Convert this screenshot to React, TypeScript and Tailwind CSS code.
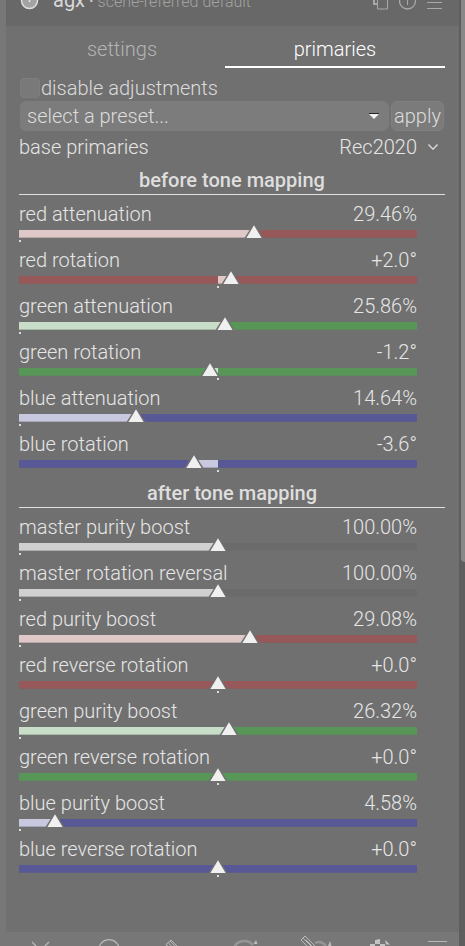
import { useId, useState } from "react";
import type { ReactNode } from "react";

type Tone = "red" | "green" | "blue" | "gray";

const tones: Record<Tone, { track: string; fill: string }> = {
  red: { track: "bg-[#965858] border-[#8b5c5c]", fill: "bg-[#dec8c8] border-[#b9a6a6]" },
  green: { track: "bg-[#589658] border-[#5c8b5c]", fill: "bg-[#c8dec8] border-[#a6b9a6]" },
  blue: { track: "bg-[#585896] border-[#5c5c8b]", fill: "bg-[#c8c8de] border-[#a6a6b9]" },
  gray: { track: "bg-[#6b6b6b] border-[#6d6d6d]", fill: "bg-[#d0d0d0] border-[#acacac]" },
};

type SliderSpec = {
  label: string;
  tone: Tone;
  value: number;
  min: number;
  max: number;
  unit: "%" | "°";
  origin: number;
};

const percent = (label: string, tone: Tone, value: number, max = 50): SliderSpec => ({
  label, tone, value, min: 0, max, unit: "%", origin: 0,
});
const angle = (label: string, tone: Tone, value: number): SliderSpec => ({
  label, tone, value, min: -30, max: 30, unit: "°", origin: 50,
});

const before: SliderSpec[] = [
  percent("red attenuation", "red", 29.46),
  angle("red rotation", "red", 2),
  percent("green attenuation", "green", 25.86),
  angle("green rotation", "green", -1.2),
  percent("blue attenuation", "blue", 14.64),
  angle("blue rotation", "blue", -3.6),
];

const after: SliderSpec[] = [
  percent("master purity boost", "gray", 100, 200),
  percent("master rotation reversal", "gray", 100, 200),
  percent("red purity boost", "red", 29.08),
  angle("red reverse rotation", "red", 0),
  percent("green purity boost", "green", 26.32),
  angle("green reverse rotation", "green", 0),
  percent("blue purity boost", "blue", 4.58),
  angle("blue reverse rotation", "blue", 0),
];

function format(value: number, unit: "%" | "°") {
  if (unit === "%") return value.toFixed(2) + "%";
  return (value >= 0 ? "+" : "") + value.toFixed(1) + "°";
}

function Slider({ spec }: { spec: SliderSpec }) {
  const id = useId();
  const [value, setValue] = useState(spec.value);
  const position = ((value - spec.min) / (spec.max - spec.min)) * 100;
  const start = Math.min(position, spec.origin);
  const length = Math.abs(position - spec.origin);
  const tone = tones[spec.tone];
  return (
    <div className="mr-7 pb-2">
      <div className="mb-0.5 flex justify-between leading-7">
        <label htmlFor={id}>{spec.label}</label>
        <output htmlFor={id}>{format(value, spec.unit)}</output>
      </div>
      <div className={"relative h-2 border-b " + tone.track}>
        <div
          className={"absolute top-0 h-2 border-b " + tone.fill}
          style={{ left: `${start}%`, width: `${length}%` }}
        />
        <div
          className="absolute top-2.5 h-0.5 w-0.5 bg-[#dcdcdc]"
          style={{ left: spec.origin === 0 ? "0" : "calc(50% - 1px)" }}
        />
        <svg
          className="absolute -top-[7px] h-[15px] w-[22px] -translate-x-1/2"
          style={{ left: `${position}%` }}
          viewBox="0 0 22 15"
          aria-hidden="true"
        >
          <path d="M11 0 L20.5 15 H1.5 Z" fill="#707070" />
          <path d="M11 2.2 L18.6 15 H3.4 Z" fill="#f0f0f0" />
        </svg>
        <input
          id={id}
          type="range"
          min={spec.min}
          max={spec.max}
          step={spec.unit === "%" ? 0.01 : 0.1}
          value={value}
          onChange={(e) => setValue(Number(e.target.value))}
          className="absolute -top-1 left-0 h-4 w-full cursor-pointer opacity-0"
        />
      </div>
    </div>
  );
}

function Section({ title, sliders }: { title: string; sliders: SliderSpec[] }) {
  return (
    <section>
      <h2 className="mb-[5px] border-b border-[#e0e0e0] text-center leading-7 font-medium text-[#dedede]">{title}</h2>
      {sliders.map((s) => (
        <Slider key={s.label} spec={s} />
      ))}
    </section>
  );
}

function IconButton({ label, children }: { label: string; children: ReactNode }) {
  return (
    <button type="button" aria-label={label} className="shrink-0">
      {children}
    </button>
  );
}

function ModuleHeader() {
  return (
    <header className="flex h-[26px] shrink-0 items-end justify-between overflow-hidden bg-[#686868] pr-4 pl-[14px]">
      <div className="flex items-end gap-[14px]">
        <IconButton label="toggle module">
          <svg className="mb-4 h-[19px] w-[19px]" viewBox="0 0 19 19" fill="none">
            <circle cx="9.5" cy="9.5" r="8" fill="#a3a3a3" stroke="#dedede" strokeWidth="1.5" />
            <path d="M9.5 4v7" stroke="#e8e8e8" strokeWidth="1.5" />
          </svg>
        </IconButton>
        <p className="flex items-baseline pb-3 leading-6 whitespace-pre">
          <span className="font-normal text-[#d8d8d8]">agx</span>
          <span className="text-base text-[#a3a3a3]">
            <span className="font-medium text-[#d0d0d0]"> · </span>scene-referred default
          </span>
        </p>
      </div>
      <div className="mb-4 flex items-end gap-2.5 text-[#a8a8a8]">
        <IconButton label="multiple instances">
          <svg className="h-[19px] w-4" viewBox="0 0 16 19" fill="none" stroke="currentColor">
            <path d="M4.5 5.5h10v12.5h-10z" />
            <path d="M1 1v12h3" strokeWidth="2" />
          </svg>
        </IconButton>
        <IconButton label="reset parameters">
          <svg className="h-[19px] w-[18px]" viewBox="0 0 18 19" fill="none" stroke="currentColor">
            <circle cx="8.5" cy="10" r="8" strokeWidth="1.3" />
            <path d="M8.5 5v9" />
          </svg>
        </IconButton>
        <IconButton label="presets">
          <svg className="h-[19px] w-4" viewBox="0 0 16 19" fill="none" stroke="currentColor">
            <path d="M0 5.5h15M0 11.5h15M0 17.5h15" />
          </svg>
        </IconButton>
      </div>
    </header>
  );
}

function BlendFooter() {
  return (
    <footer className="flex h-[14px] shrink-0 items-start justify-between overflow-hidden bg-[#777777] pr-2 pl-[22px] text-[#b8b8b8]">
      <IconButton label="off">
        <svg className="h-6 w-6" viewBox="0 0 24 24" fill="none" stroke="currentColor">
          <path d="M4 10l17 17M21 10L4 27" strokeWidth="1.3" />
        </svg>
      </IconButton>
      <IconButton label="uniformly">
        <svg className="h-6 w-6 overflow-visible" viewBox="-6 0 24 24" fill="none" stroke="currentColor">
          <circle cx="12" cy="18" r="10.3" strokeWidth="1.2" />
        </svg>
      </IconButton>
      <IconButton label="drawn mask">
        <svg className="h-6 w-6 overflow-visible" viewBox="-6 0 24 24" fill="none" stroke="currentColor">
          <path d="M7 12.5l5-4.5 18 18-4 4zM9 10.5l16 16M11 9l16 16M7 12.5l16 16" />
        </svg>
      </IconButton>
      <IconButton label="parametric mask">
        <svg className="h-6 w-9 overflow-visible" viewBox="-10 0 36 24" fill="none">
          <path d="M8 16c2-7 13-10 19-3" stroke="#959595" strokeWidth="2.5" />
          <path d="M27.500 12l2.500-4 1.500 4z" fill="#bcbcbc" />
        </svg>
      </IconButton>
      <IconButton label="drawn and parametric mask">
        <svg className="h-6 w-9 overflow-visible" viewBox="-7 0 36 24" fill="none">
          <path d="M18 11c4-2 8-1 11 3" stroke="#959595" strokeWidth="2.5" />
          <path d="M4 8l4-4 14 14-4 4zM6 6l14 14M9 8l9 9" stroke="#b8b8b8" />
          <path d="M31 14l2-5 1.500 5z" fill="#bcbcbc" />
        </svg>
      </IconButton>
      <IconButton label="raster mask">
        <svg className="h-6 w-6 overflow-visible" viewBox="-3 0 24 24" fill="none">
          <path d="M7 8l5-1v5H7zM2 12h5v6H2zM12 12h5v6h-5z" fill="#c4c4c4" />
          <path d="M17 8l5 4.500h-4z" fill="#c4c4c4" />
        </svg>
      </IconButton>
      <IconButton label="blending options">
        <svg className="h-6 w-6 overflow-visible" viewBox="1 0 24 24" fill="none" stroke="currentColor">
          <path d="M2 9.500h19M2 16.500h19" />
        </svg>
      </IconButton>
    </footer>
  );
}

const tabClass =
  "border-b-2 border-transparent pt-px pb-[3px] leading-7 text-[#b4b4b4] aria-selected:border-white aria-selected:text-white";

export default function App() {
  const [tab, setTab] = useState("primaries");
  return (
    <div className="flex h-screen overflow-hidden bg-[#777777] pl-1.5 font-['Roboto',sans-serif] text-xl font-light text-[#e6e6e6]">
      <main className="flex min-w-0 flex-1 flex-col bg-[#707070]">
        <ModuleHeader />
        <div className="min-h-0 flex-1 overflow-hidden pr-[14px] pl-[13px]">
          <div role="tablist" className="mt-2 flex">
            <button
              type="button"
              role="tab"
              aria-selected={tab === "settings"}
              onClick={() => setTab("settings")}
              className={"w-[206px] " + tabClass}
            >
              settings
            </button>
            <button
              type="button"
              role="tab"
              aria-selected={tab === "primaries"}
              onClick={() => setTab("primaries")}
              className={"flex-1 " + tabClass}
            >
              primaries
            </button>
          </div>
          <label className="mt-2 flex items-center gap-px pl-px leading-6 text-[#dcdcdc]">
            <input
              type="checkbox"
              className="h-5 w-5 appearance-none rounded border border-[#7e7e7e] bg-[#797979] checked:bg-[#c0c0c0]"
            />
            disable adjustments
          </label>
          <div className="mt-px mb-0.5 flex gap-0.5 px-px text-[#dcdcdc]">
            <div className="relative flex-1">
              <select
                aria-label="preset"
                className="h-[30px] w-full appearance-none rounded-md bg-[#7c7c7c] px-[7px] leading-7"
              >
                <option>select a preset...</option>
              </select>
              <svg className="pointer-events-none absolute top-3 right-2.5 h-1.5 w-2.5" viewBox="0 0 10 6" aria-hidden="true">
                <path d="M0 1h10L5 6z" fill="#f0f0f0" />
                <path d="M0 0h10v1H0z" fill="#222222" />
              </svg>
            </div>
            <button type="button" className="h-[30px] w-[53px] rounded-md border border-[#818181] bg-[#7b7b7b] leading-7">
              apply
            </button>
          </div>
          <div className="relative mb-[5px] flex justify-between leading-7">
            <label htmlFor="base">base primaries</label>
            <select
              id="base"
              className="h-7 appearance-none bg-transparent pr-7 leading-7 [text-align-last:right]"
            >
              <option>Rec2020</option>
            </select>
            <svg className="pointer-events-none absolute top-[11px] right-[7px] h-1.5 w-2.5" viewBox="0 0 10 6" fill="none" aria-hidden="true">
              <path d="M0.5 0.5l4.5 4.7 4.5-4.7" stroke="#dedede" strokeWidth="1.3" />
            </svg>
          </div>
          <Section title="before tone mapping" sliders={before} />
          <div className="h-[3px]" />
          <Section title="after tone mapping" sliders={after} />
        </div>
        <BlendFooter />
      </main>
      <div className="w-1.5 bg-[#5e5e5e] pl-0.5">
        <div className="h-[59.4%] rounded-bl bg-[#888888]" />
      </div>
    </div>
  );
}
